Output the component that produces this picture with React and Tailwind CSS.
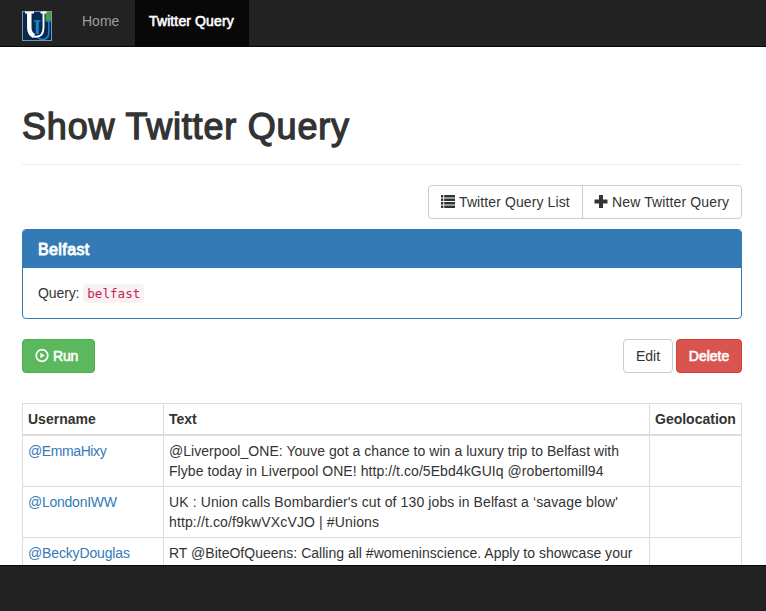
const tweets = [
  {
    user: '@EmmaHixy',
    userTracking: 'tracking-[-0.4px]',
    lines: [
      ['@Liverpool_ONE: Youve got a chance to win a luxury trip to Belfast with', 'tracking-[0.045px]'],
      ['Flybe today in Liverpool ONE! http://t.co/5Ebd4kGUIq @robertomill94', 'tracking-[0.06px]'],
    ],
  },
  {
    user: '@LondonIWW',
    userTracking: 'tracking-[-0.25px]',
    lines: [
      ["UK : Union calls Bombardier's cut of 130 jobs in Belfast a ‘savage blow'", 'tracking-[0.11px]'],
      ['http://t.co/f9kwVXcVJO | #Unions', 'tracking-[0.13px]'],
    ],
  },
  {
    user: '@BeckyDouglas',
    userTracking: 'tracking-[-0.15px]',
    lines: [
      ['RT @BiteOfQueens: Calling all #womeninscience. Apply to showcase your', 'tracking-[0.01px]'],
      ['', ''],
    ],
  },
];

function Logo() {
  return (
    <svg width="30" height="30" viewBox="0 0 30 30" className="block">
      <rect width="30" height="30" fill="#07284f" />
      <path d="M23.5 1H29V10H25Q23.5 10 23.5 8.500Z" fill="#43a047" />
      <path d="M12 10H18.500M23.500 10H29M26.800 10V21Q26.800 28.500 20.500 28.500Q17.500 28.500 15.500 26" fill="none" stroke="#1686cf" strokeWidth="1.500" />
      <path d="M15.300 10V23" fill="none" stroke="#1686cf" strokeWidth="3" />
      <rect x=".5" y=".5" width="29" height="29" fill="none" stroke="#8393a8" />
      <path d="M3 1.500H12M18.500 1.500H24.500M21.500 1.500V16.500Q21.500 25.800 14 25.800Q10 25.800 8 23" fill="none" stroke="#fff" strokeWidth="1.900" />
      <path d="M7.300 1V17Q7.300 22.500 12 25" fill="none" stroke="#fff" strokeWidth="4.500" />
    </svg>
  );
}

function ListIcon() {
  return (
    <svg width="14" height="14" viewBox="0 0 14 14" fill="currentColor" className="block shrink-0">
      <path d="M0 0h2.300v2.400H0zM0 3.500h2.300v2.400H0zM0 7h2.300v2.400H0zM0 10.500h2.300v2.400H0zM3.200 0H14v2.400H3.200zM3.200 3.500H14v2.400H3.200zM3.200 7H14v2.400H3.200zM3.200 10.500H14v2.400H3.200z" />
    </svg>
  );
}

function PlusIcon() {
  return (
    <svg width="14" height="14" viewBox="0 0 14 14" fill="currentColor" className="block shrink-0">
      <path d="M5.5 0h3q.5 0 .5.5V4.500h4q.5 0 .5.5v3q0 .5-.5.5H9v4q0 .5-.5.5h-3Q5 13 5 12.500V8.500H1q-.5 0-.5-.5V5q0-.5.5-.5h4V.5Q5 0 5.500 0z" />
    </svg>
  );
}

function RunIcon() {
  return (
    <svg width="14" height="14" viewBox="0 0 14 14" className="block shrink-0">
      <circle cx="7" cy="6.500" r="5.8" fill="none" stroke="currentColor" strokeWidth="1.7" />
      <path d="M5.4 3.700L9.700 6.500L5.400 9.300z" fill="currentColor" />
    </svg>
  );
}

export default function App() {
  return (
    <div className="flex h-[611px] w-[766px] flex-col overflow-hidden bg-white font-['Liberation_Sans',Arial,sans-serif] text-[14px] leading-5 text-[#333]">
      <nav className="flex h-[47px] shrink-0 border-b border-[#080808] bg-[#222] pl-[22px]">
        <a className="mr-4 pt-[11px]"><Logo /></a>
        <a className="w-[67px] pt-[11px] pl-[14px] text-[#9d9d9d]">Home</a>
        <a className="w-[114px] bg-[#080808] pt-[11px] pl-[14px] tracking-[0.12px] whitespace-nowrap text-white [-webkit-text-stroke:0.6px_white]">Twitter Query</a>
      </nav>

      <main className="flex min-h-0 flex-1 flex-col overflow-hidden pr-6 pl-[22px]">
        <h1 className="mt-[60px] h-[58px] shrink-0 border-b border-[#eee] text-[36px] leading-[40px] font-normal tracking-[0.8px] whitespace-nowrap [-webkit-text-stroke:1.3px_#333]">Show Twitter Query</h1>

        <div className="mt-5 flex h-[34px] shrink-0 self-end rounded border border-[#ccc]">
          <button className="flex w-[154px] items-center gap-1 border-r border-[#ccc] pl-3 tracking-[0.1px] whitespace-nowrap"><ListIcon />Twitter Query List</button>
          <button className="flex w-[158px] items-center gap-1 pl-[11px] tracking-[0.13px] whitespace-nowrap"><PlusIcon />New Twitter Query</button>
        </div>

        <section className="mt-[10px] h-[90px] shrink-0 overflow-hidden rounded border border-[#337ab7]">
          <h2 className="h-[38px] bg-[#337ab7] pt-[11px] pl-[15px] text-[16px] leading-[18px] tracking-[0.4px] text-white [-webkit-text-stroke:0.9px_white]">Belfast</h2>
          <p className="pt-[15px] pl-[15px] tracking-[-0.1px]">Query: <code className="rounded bg-[#f9f2f4] px-1 py-0.5 font-['DejaVu_Sans_Mono',monospace] text-[12.6px] tracking-normal text-[#c7254e]">belfast</code></p>
        </section>

        <div className="mt-5 flex h-[34px] shrink-0 gap-[3px]">
          <button className="mr-auto flex w-[73px] items-center gap-1 rounded border border-[#4cae4c] bg-[#5cb85c] pl-3 tracking-[-0.2px] text-white [-webkit-text-stroke:0.6px_white]"><RunIcon />Run</button>
          <button className="w-[50px] rounded border border-[#ccc]">Edit</button>
          <button className="w-[66px] rounded border border-[#d43f3a] bg-[#d9534f] text-white [-webkit-text-stroke:0.6px_white]">Delete</button>
        </div>

        <table className="mt-[30px] w-[720px] shrink-0 table-fixed border-separate border-spacing-0 border-t border-l border-[#ddd] text-left">
          <colgroup>
            <col className="w-[141px]" />
            <col className="w-[486px]" />
            <col className="w-[92px]" />
          </colgroup>
          <thead>
            <tr>
              {['Username', 'Text', 'Geolocation'].map((title) => (
                <th key={title} className="h-8 border-r border-b-2 border-[#ddd] pt-1 pb-[5px] pl-[5px] font-bold whitespace-nowrap">{title}</th>
              ))}
            </tr>
          </thead>
          <tbody>
            {tweets.map(({ user, userTracking, lines }) => (
              <tr key={user} className="h-[51px] align-top">
                <td className="border-r border-b border-[#ddd] py-[5px] pl-[5px] text-[#337ab7]"><a className={userTracking}>{user}</a></td>
                <td className="border-r border-b border-[#ddd] py-[5px] pl-[5px] whitespace-nowrap">
                  {lines.map(([line, tracking], i) => <div key={i} className={`h-5 ${tracking}`}>{line}</div>)}
                </td>
                <td className="border-r border-b border-[#ddd]" />
              </tr>
            ))}
          </tbody>
        </table>
      </main>

      <footer className="h-[46px] shrink-0 border-t border-[#080808] bg-[#222]" />
    </div>
  );
}
